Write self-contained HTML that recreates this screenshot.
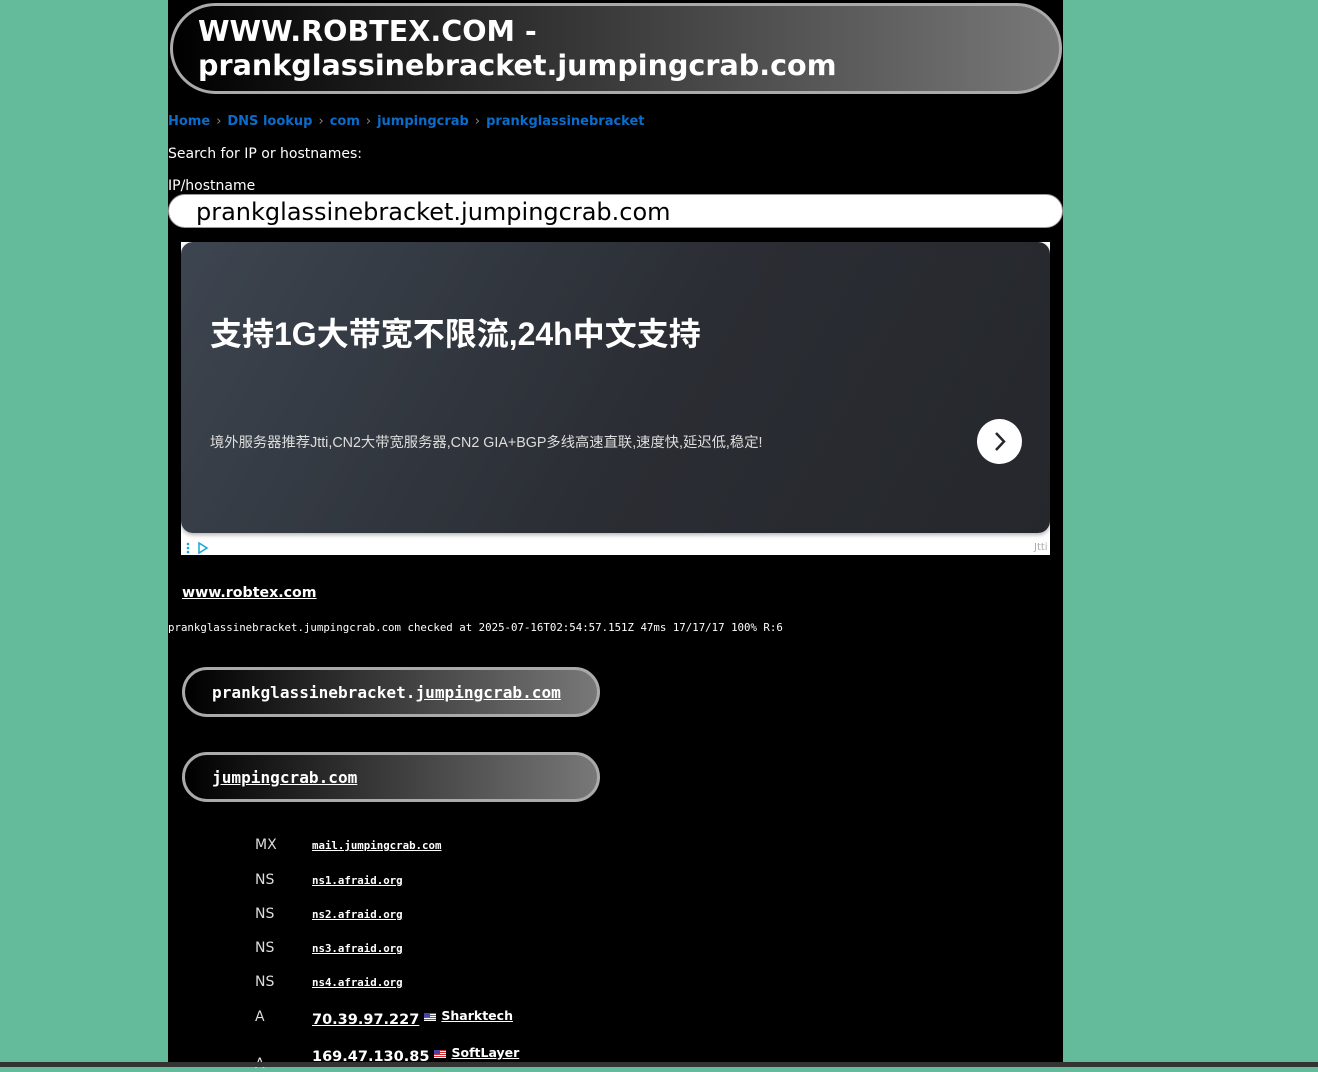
<!DOCTYPE html>
<html><head><meta charset="utf-8"><style>
*{margin:0;padding:0;box-sizing:border-box}
html,body{width:1318px;height:1067px;overflow:hidden;background:#63bb9b;font-family:"DejaVu Sans","Liberation Sans",sans-serif}
#col{position:absolute;left:168px;top:0;width:895px;height:1067px;background:#000;color:#fff}
.abs{position:absolute;white-space:nowrap}
.pill{position:absolute;border:3px solid #aaa;background:linear-gradient(90deg,#000,#787878)}
h1{font-size:28.6px;font-weight:bold;line-height:34px;color:#fff}
.bc{font-size:13px;font-weight:bold;color:#0a6ccc}
.bc span{color:#888;font-weight:normal;margin:0 6px}
a,u{color:#fff}
.mono{font-family:"DejaVu Sans Mono",monospace}
.ty{font-size:14px;color:#ddd}
.lk{font-family:"DejaVu Sans Mono",monospace;font-size:10.75px;font-weight:bold;text-decoration:underline}
.flag{display:inline-block;width:12px;height:8px;background:repeating-linear-gradient(#c33 0 1px,#fff 1px 2px);position:relative;vertical-align:3px}
.flag:before{content:"";position:absolute;left:0;top:0;width:6px;height:4px;background:#44a}
</style></head><body>
<div style="position:absolute;left:0;top:0;width:1318px;height:3px;background:#63bb9b"></div>
<div id="col">
<div class="pill" style="left:2px;top:3px;width:892px;height:91px;border-radius:46px"></div>
<h1 class="abs" style="left:30px;top:14px">WWW.ROBTEX.COM -<br>prankglassinebracket.jumpingcrab.com</h1>
<div class="abs bc" style="left:0;top:114px">Home<span>›</span>DNS lookup<span>›</span>com<span>›</span>jumpingcrab<span>›</span>prankglassinebracket</div>
<div class="abs" style="left:0;top:146px;font-size:14px">Search for IP or hostnames:</div>
<div class="abs" style="left:0;top:178px;font-size:14px">IP/hostname</div>
<div class="abs" style="left:0;top:194px;width:895px;height:34px;background:#fff;border:1px solid #999;border-radius:17px"></div>
<div class="abs" style="left:28px;top:196px;font-size:24px;color:#000;line-height:32px">prankglassinebracket.jumpingcrab.com</div>
<div class="abs" style="left:13px;top:242px;width:869px;height:313px;background:#fff"></div>
<div class="abs" style="left:13px;top:242px;width:869px;height:291px;border-radius:12px;background:linear-gradient(120deg,#3d4550,#2a2d33 55%,#25272c);box-shadow:0 2px 4px rgba(0,0,0,.3)"></div>
<div class="abs" style="left:42px;top:309px;font-size:32px;font-weight:bold;font-family:'Liberation Sans','Noto Sans CJK SC',sans-serif">支持1G大带宽不限流,24h中文支持</div>
<div class="abs" style="left:42px;top:431px;font-size:14.3px;color:#ddd;font-family:'Liberation Sans','Noto Sans CJK SC',sans-serif">境外服务器推荐Jtti,CN2大带宽服务器,CN2 GIA+BGP多线高速直联,速度快,延迟低,稳定!</div>
<div class="abs" style="left:809px;top:419px;width:45px;height:45px;border-radius:50%;background:#fff"><svg width="45" height="45"><path d="M19 14l8 8.5-8 8.5" stroke="#25272c" stroke-width="2.5" fill="none"/></svg></div>
<svg class="abs" style="left:17px;top:541px" width="30" height="14"><g fill="#1aa6d8"><circle cx="3" cy="3" r="1.3"/><circle cx="3" cy="7" r="1.3"/><circle cx="3" cy="11" r="1.3"/></g><path d="M14 2v10l8-5z" stroke="#1aa6d8" stroke-width="1.5" fill="none"/></svg>
<div class="abs" style="left:866px;top:542px;font-size:10px;color:#aaa">Jtti</div>
<div class="abs" style="left:14px;top:585px;font-size:14.2px;font-weight:bold"><u>www.robtex.com</u></div>
<div class="abs mono" style="left:0;top:621px;font-size:10.75px">prankglassinebracket.jumpingcrab.com checked at 2025-07-16T02:54:57.151Z 47ms 17/17/17 100% R:6</div>
<div class="pill" style="left:14px;top:667px;width:418px;height:50px;border-radius:25px"></div>
<div class="abs mono" style="left:44px;top:683px;font-size:16.1px;font-weight:bold">prankglassinebracket.<u>jumpingcrab.com</u></div>
<div class="pill" style="left:14px;top:752px;width:418px;height:50px;border-radius:25px"></div>
<div class="abs mono" style="left:44px;top:768px;font-size:16.1px;font-weight:bold"><u>jumpingcrab.com</u></div>
<div class="abs ty" style="left:87px;top:837px">MX</div><div class="abs lk" style="left:144px;top:839px">mail.jumpingcrab.com</div>
<div class="abs ty" style="left:87px;top:872px">NS</div><div class="abs lk" style="left:144px;top:874px">ns1.afraid.org</div>
<div class="abs ty" style="left:87px;top:906px">NS</div><div class="abs lk" style="left:144px;top:908px">ns2.afraid.org</div>
<div class="abs ty" style="left:87px;top:940px">NS</div><div class="abs lk" style="left:144px;top:942px">ns3.afraid.org</div>
<div class="abs ty" style="left:87px;top:974px">NS</div><div class="abs lk" style="left:144px;top:976px">ns4.afraid.org</div>
<div class="abs ty" style="left:87px;top:1009px">A</div>
<div class="abs" style="left:144px;top:1008px;font-size:14.5px;font-weight:bold"><u>70.39.97.227</u><span class="flag" style="margin-left:5px"></span> <u style="font-size:12.5px;vertical-align:4px">Sharktech</u></div>
<div class="abs ty" style="left:87px;top:1056px">A</div>
<div class="abs" style="left:144px;top:1045px;font-size:14.5px;font-weight:bold"><u>169.47.130.85</u><span class="flag" style="margin-left:5px"></span> <u style="font-size:12.5px;vertical-align:4px">SoftLayer</u></div>
</div>
<div style="position:absolute;left:0;top:1062px;width:1318px;height:5px;background:#333"></div>
</body></html>
